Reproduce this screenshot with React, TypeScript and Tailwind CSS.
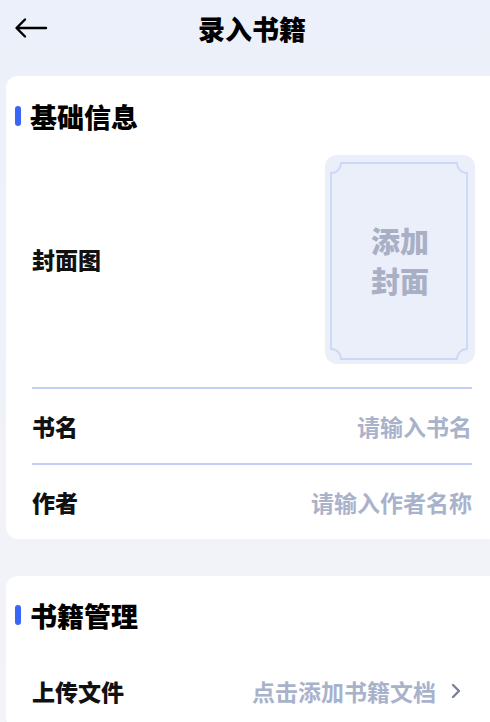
import React from "react";

const font = { fontFamily: '"Noto Sans CJK SC", "Noto Sans", sans-serif' };

function SectionTitle({ text }: { text: string }) {
  return (
    <div className="flex items-center pl-[9px] h-[40px]">
      <div className="w-[6px] h-[20px] rounded-full bg-[#3a66f7]" />
      <div className="ml-[9px] text-[27px] font-black text-black leading-none">{text}</div>
    </div>
  );
}

function Row({ label, placeholder, border = true, chevron = false }: { label: string; placeholder: string; border?: boolean; chevron?: boolean }) {
  return (
    <div className={`flex items-center justify-between h-[76px] ${border ? "border-t-2 border-[#c4cefa]" : ""}`}>
      <span className="text-[23px] font-extrabold text-[#111] leading-none">{label}</span>
      <span className="flex items-center">
        <span className="text-[23px] text-[#a9b2cb] font-bold leading-none">{placeholder}</span>
        {chevron && (
          <svg width="12" height="18" viewBox="0 0 12 18" className="ml-[14px] mr-[10px]">
            <path d="M3 3 L9 9 L3 15" fill="none" stroke="#7b8196" strokeWidth="2.4" strokeLinecap="round" strokeLinejoin="round" />
          </svg>
        )}
      </span>
    </div>
  );
}

export default function App() {
  return (
    <div style={font} className="w-[490px] h-[722px] overflow-hidden bg-gradient-to-b from-[#ecf0fa] to-[#f3f4f8]">
      <div className="relative w-[504px] h-[57px] flex items-center justify-center">
        <svg width="34" height="22" viewBox="0 0 34 22" className="absolute left-[14px] top-[17px]">
          <path d="M32 11 H3 M11 2.5 L2.5 11 L11 19.5" fill="none" stroke="#000" strokeWidth="2.4" strokeLinecap="round" strokeLinejoin="round" />
        </svg>
        <div className="text-[27px] font-black text-black leading-none">录入书籍</div>
      </div>

      <div className="mt-[19px] ml-[6px] w-[494px] bg-white rounded-l-[12px] pt-[20px]">
        <SectionTitle text="基础信息" />
        <div className="pl-[26px] pr-[28px]">
          <div className="flex items-center justify-between pt-[19px] pb-[23px]">
            <span className="text-[23px] font-extrabold text-[#111] leading-none">封面图</span>
            <div className="relative w-[150px] h-[209px] rounded-[12px] bg-[#ebeffa] flex items-center justify-center mr-[-3px]">
              <svg width="150" height="209" viewBox="0 0 150 209" className="absolute inset-0">
                <path d="M16 8 H132 A10 10 0 0 0 142 18 V194 A10 10 0 0 0 132 204 H16 A10 10 0 0 0 6 194 V18 A10 10 0 0 0 16 8 Z" fill="none" stroke="#cdd8f8" strokeWidth="1.8" />
              </svg>
              <div className="relative text-[29px] font-black text-[#a9b0c6] leading-[40px] text-center">
                添加<br />封面
              </div>
            </div>
          </div>
          <Row label="书名" placeholder="请输入书名" />
          <Row label="作者" placeholder="请输入作者名称" />
        </div>
      </div>

      <div className="mt-[37px] ml-[6px] w-[494px] bg-white rounded-l-[12px] pt-[19px]">
        <SectionTitle text="书籍管理" />
        <div className="pl-[26px] pr-[28px] pt-[18px]">
          <Row label="上传文件" placeholder="点击添加书籍文档" border={false} chevron />
        </div>
      </div>
    </div>
  );
}
